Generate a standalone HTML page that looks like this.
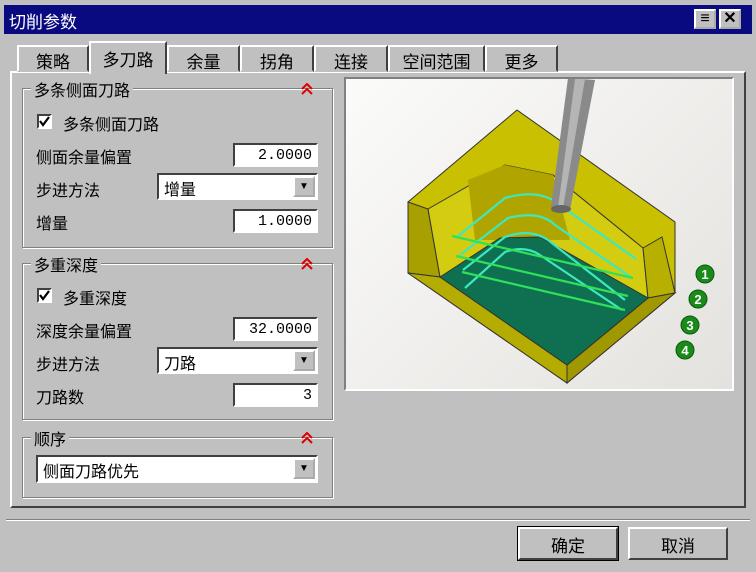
<!DOCTYPE html>
<html><head><meta charset="utf-8"><style>
*{box-sizing:border-box;margin:0;padding:0}
body{width:756px;height:572px;background:#c0c0c0;font-family:"Liberation Sans","Noto Sans CJK SC","WenQuanYi Zen Hei",sans-serif;font-size:16px;color:#000;position:relative;overflow:hidden}
.a{position:absolute}
.title{left:4px;top:5px;width:748px;height:29px;background:#0a0a80;color:#fff;font-size:17px;padding:3px 5px}
.tb{top:4px;width:22px;height:20px;background:#c0c0c0;border:2px outset #fff;font-size:16px;text-align:center;line-height:15px;color:#000;font-weight:bold}
.tab{top:43px;height:30px;border:2px solid;border-color:#fff #404040 #c0c0c0 #fff;text-align:center;padding-top:1px;font-size:17px}
.panel{left:10px;top:71px;width:736px;height:437px;border:2px solid;border-color:#fff #404040 #404040 #fff}
.grp{border:1px solid #808080;box-shadow:1px 1px 0 #fff inset,1px 1px 0 #fff}
.lg{background:#c0c0c0;padding:0 3px}
.inp{background:#fff;border:2px solid;border-color:#404040 #fff #fff #404040;height:24px;font-family:"Liberation Mono",monospace;font-size:15px;text-align:right;padding:2px 4px}
.sel{background:#fff;border:2px solid;border-color:#404040 #fff #fff #404040;height:27px;padding:1px 5px}
.arr{position:absolute;right:1px;top:1px;width:22px;height:21px;background:#c0c0c0;border:2px outset #fff;font-size:10px;text-align:center;line-height:17px}
.chk{width:15px;height:15px;background:#fff;border:2px solid;border-color:#404040 #fff #fff #404040}
.btn{top:527px;width:100px;height:33px;background:#c0c0c0;border:2px solid;border-color:#fff #404040 #404040 #fff;text-align:center;padding-top:3px;font-size:17px}
</style></head><body>
<div class="a title">切削参数
<div class="a tb" style="left:690px">≡</div><div class="a tb" style="left:715px">✕</div></div>
<div class="a panel"></div>
<div class="a tab" style="left:17px;width:72px;top:45px;height:27px">策略</div>
<div class="a tab" style="left:89px;width:78px;top:41px;height:33px;border-bottom:none;background:#c0c0c0;padding-top:3px">多刀路</div>
<div class="a tab" style="left:167px;width:73px;top:45px;height:27px">余量</div>
<div class="a tab" style="left:240px;width:74px;top:45px;height:27px">拐角</div>
<div class="a tab" style="left:314px;width:74px;top:45px;height:27px">连接</div>
<div class="a tab" style="left:388px;width:97px;top:45px;height:27px">空间范围</div>
<div class="a tab" style="left:485px;width:73px;top:45px;height:27px">更多</div>

<svg width="0" height="0" style="position:absolute"><defs><g id="up"><path d="M1,6 L6,1 L11,6 M1,11 L6,6 L11,11" fill="none" stroke="#d00" stroke-width="2"/></g>
<g id="ck"><path d="M2,6 L5,10 L11,2" fill="none" stroke="#000" stroke-width="2.2"/></g></defs></svg>

<div class="a grp" style="left:22px;top:88px;width:311px;height:160px"></div>
<div class="a lg" style="left:31px;top:77px">多条侧面刀路</div>
<svg class="a" style="left:301px;top:83px" width="13" height="13"><use href="#up"/></svg>
<div class="a chk" style="left:37px;top:114px"><svg width="13" height="13" style="position:absolute;left:-1px;top:-1px"><use href="#ck"/></svg></div><div class="a" style="left:63px;top:111px">多条侧面刀路</div>
<div class="a" style="left:36px;top:144px">侧面余量偏置</div><div class="a inp" style="left:233px;top:143px;width:85px">2.0000</div>
<div class="a" style="left:36px;top:177px">步进方法</div><div class="a sel" style="left:157px;top:173px;width:161px">增量<div class="arr">▼</div></div>
<div class="a" style="left:36px;top:210px">增量</div><div class="a inp" style="left:233px;top:209px;width:85px">1.0000</div>

<div class="a grp" style="left:22px;top:263px;width:311px;height:157px"></div>
<div class="a lg" style="left:31px;top:252px">多重深度</div>
<svg class="a" style="left:301px;top:258px" width="13" height="13"><use href="#up"/></svg>
<div class="a chk" style="left:37px;top:288px"><svg width="13" height="13" style="position:absolute;left:-1px;top:-1px"><use href="#ck"/></svg></div><div class="a" style="left:63px;top:285px">多重深度</div>
<div class="a" style="left:36px;top:318px">深度余量偏置</div><div class="a inp" style="left:233px;top:317px;width:85px">32.0000</div>
<div class="a" style="left:36px;top:351px">步进方法</div><div class="a sel" style="left:157px;top:347px;width:161px">刀路<div class="arr">▼</div></div>
<div class="a" style="left:36px;top:384px">刀路数</div><div class="a inp" style="left:233px;top:383px;width:85px">3</div>

<div class="a grp" style="left:22px;top:437px;width:311px;height:61px"></div>
<div class="a lg" style="left:31px;top:426px">顺序</div>
<svg class="a" style="left:301px;top:432px" width="13" height="13"><use href="#up"/></svg>
<div class="a sel" style="left:36px;top:455px;width:282px;height:28px">侧面刀路优先<div class="arr">▼</div></div>

<div class="a" style="left:344px;top:77px;width:390px;height:314px;border:2px solid;border-color:#808080 #fff #fff #808080;background:linear-gradient(135deg,#fbfbfa,#e4e2de)">
<svg width="386" height="310" viewBox="346 79 386 310" style="position:absolute;left:0;top:0">
<polygon points="517,110 408,202 408,273 567,383 675,293 675,222" fill="#c8c000" stroke="#333" stroke-width="1"/>
<polygon points="408,202 428,209 440,277 408,273" fill="#a8a000" stroke="#333" stroke-width="1"/>
<polygon points="428,209 505,165 553,175 643,248 648,298 567,365 440,277" fill="#d4cc10" stroke="#333" stroke-width="1"/>
<polygon points="468,180 505,165 553,175 570,240 475,240" fill="#b0a400"/>
<polygon points="643,248 662,237 675,293 648,298" fill="#b8b000" stroke="#333"/>
<polygon points="567,383 567,365 648,298 675,293" fill="#a09800" stroke="#333"/>
<polygon points="440,277 567,365 567,383 408,273" fill="#b4ac00" stroke="#333"/>
<polygon points="440,277 500,238 540,237 648,298 567,365" fill="#0e7050" stroke="#333"/>
<g fill="none" stroke-width="2.2">
<path d="M457,237 L505,198 Q540,188 560,205 L636,259" stroke="#3de8c0"/>
<path d="M460,255 L508,218 Q540,210 555,225 L632,278" stroke="#3de8c0"/>
<path d="M463,270 L505,237 Q530,228 548,240 L625,300" stroke="#3de8c0"/>
<path d="M465,288 L505,252 Q525,245 540,255 L622,310" stroke="#3de8c0"/>
<path d="M452,236 L633,278 M456,256 L628,296 M462,272 L625,310" stroke="#2ee05a"/>
</g>
<polygon points="568,78 595,80 570,210 551,207" fill="#8a8a8a"/>
<polygon points="575,79 585,79 563,208 558,208" fill="#b5b5b5"/>
<ellipse cx="561" cy="209" rx="10" ry="4" fill="#666"/>
<g fill="#1a8a1a" stroke="#0a5a0a"><circle cx="705" cy="274" r="9"/><circle cx="698" cy="299" r="9"/><circle cx="690" cy="325" r="9"/><circle cx="685" cy="350" r="9"/></g>
<g fill="#fff" font-size="13" font-weight="bold" text-anchor="middle" font-family="Liberation Sans"><text x="705" y="279">1</text><text x="698" y="304">2</text><text x="690" y="330">3</text><text x="685" y="355">4</text></g>
</svg></div>

<div class="a" style="left:6px;top:519px;width:744px;height:2px;border-top:1px solid #808080;border-bottom:1px solid #fff"></div>
<div class="a btn" style="left:518px;outline:1px solid #000">确定</div>
<div class="a btn" style="left:628px">取消</div>
</body></html>
